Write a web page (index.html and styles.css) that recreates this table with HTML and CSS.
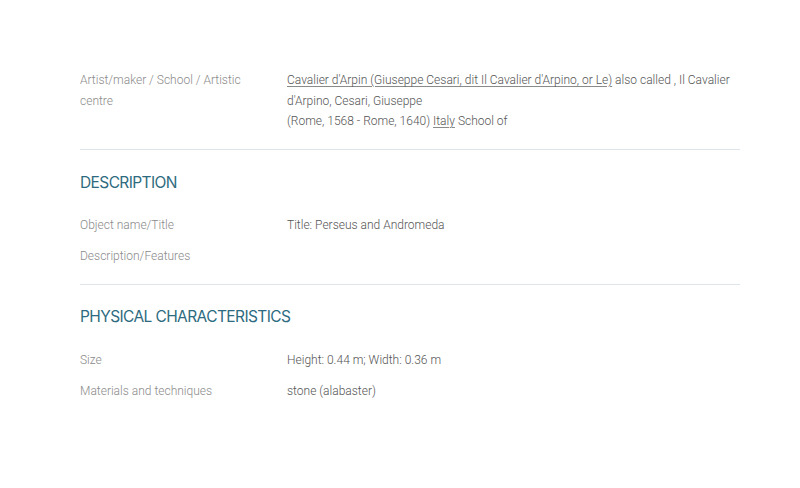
FILE: index.html
```html
<!DOCTYPE html>
<html>
<head>
<meta charset="utf-8">
<link rel="stylesheet" href="styles.css">
</head>
<body>
<main class="record">
  <section class="block first">
    <dl class="fields">
      <div class="field">
        <dt>Artist/maker / School / Artistic centre</dt>
        <dd><a href="#">Cavalier d'Arpin (Giuseppe Cesari, dit Il Cavalier d'Arpino, or Le)</a> also called , Il Cavalier d'Arpino, Cesari, Giuseppe<br>(Rome, 1568 - Rome, 1640) <a href="#">Italy</a> School of</dd>
      </div>
    </dl>
  </section>
  <section class="block">
    <h2>DESCRIPTION</h2>
    <dl class="fields">
      <div class="field">
        <dt>Object name/Title</dt>
        <dd>Title: Perseus and Andromeda</dd>
      </div>
      <div class="field">
        <dt>Description/Features</dt>
        <dd></dd>
      </div>
    </dl>
  </section>
  <section class="block last">
    <h2>PHYSICAL CHARACTERISTICS</h2>
    <dl class="fields">
      <div class="field">
        <dt>Size</dt>
        <dd>Height: 0.44 m; Width: 0.36 m</dd>
      </div>
      <div class="field">
        <dt>Materials and techniques</dt>
        <dd>stone (alabaster)</dd>
      </div>
    </dl>
  </section>
</main>
</body>
</html>
```
FILE: styles.css
```css
html, body {
  margin: 0;
  padding: 0;
  background: #ffffff;
}
body {
  font-family: Roboto, "Liberation Sans", sans-serif;
  font-weight: 300;
  font-size: 12px;
  line-height: 20.5px;
  color: #555555;
}
.record {
  padding: 70px 60px 0 80px;
}
.block {
  border-bottom: 1px solid #dde5ea;
  padding-bottom: 18px;
  margin-bottom: 21px;
}
.block.first {
  padding-bottom: 17px;
  margin-bottom: 22px;
}
.block.last {
  border-bottom: none;
}
h2 {
  margin: 0 0 22px 0;
  padding-top: 1px;
  font-family: Inter, "Open Sans", sans-serif;
  font-weight: 400;
  font-size: 15.5px;
  line-height: 20px;
  letter-spacing: -0.6px;
  color: #2e6b80;
}
.last h2 {
  margin-bottom: 23px;
}
.fields {
  margin: 0;
  display: flex;
  flex-direction: column;
  gap: 10.5px;
}
.field {
  display: grid;
  grid-template-columns: 207px 1fr;
}
dt {
  color: #8a8a8a;
  padding-right: 20px;
}
dd {
  margin: 0;
  color: #555555;
}
a {
  color: #555555;
  text-decoration: underline;
  text-decoration-color: #8a8a8a;
  text-underline-offset: 2px;
}
```
